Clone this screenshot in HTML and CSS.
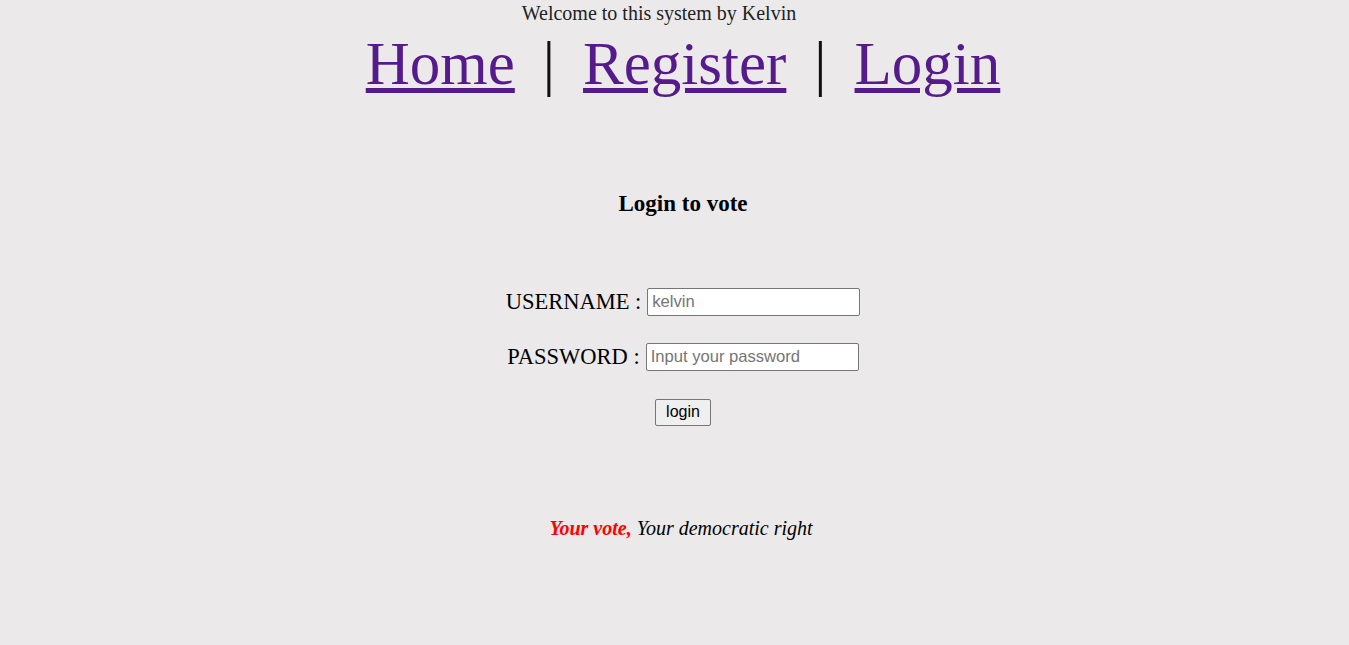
FILE: index.html
```html
<!DOCTYPE html>
<html>
<head>
<meta charset="utf-8">
<link rel="stylesheet" href="styles.css">
</head>
<body>
<div class="page">
  <p class="welcome">Welcome to this system by Kelvin</p>
  <nav class="nav">
    <a href="#" class="nav-link">Home</a><span class="sep">|</span><a href="#" class="nav-link">Register</a><span class="sep">|</span><a href="#" class="nav-link">Login</a>
  </nav>
  <h3 class="title">Login to vote</h3>
  <form class="form">
    <div class="row"><label class="label">USERNAME :</label><input class="field" type="text" placeholder="kelvin"></div>
    <div class="row"><label class="label">PASSWORD :</label><input class="field" type="password" placeholder="Input your password"></div>
    <div class="row"><button class="btn" type="button">login</button></div>
  </form>
  <p class="motto"><b class="red">Your vote,</b> Your democratic right</p>
</div>
</body>
</html>
```
FILE: styles.css
```css
html, body {
  margin: 0;
  padding: 0;
  background: #ebe9ea;
  font-family: "Liberation Serif", "Times New Roman", serif;
}
.page {
  display: flex;
  flex-direction: column;
  align-items: center;
  height: 645px;
  padding-left: 17px;
  box-sizing: border-box;
}
.welcome {
  margin: 2px 48px 0 0;
  font-size: 20px;
  line-height: 22px;
  color: #222;
}
.nav {
  display: flex;
  align-items: baseline;
  font-size: 61px;
  line-height: 80px;
  margin-top: 0;
}
.nav-link {
  color: #551a8b;
  text-decoration: underline;
  text-decoration-thickness: 5px;
  text-underline-offset: 4px;
}
.sep {
  color: #111;
  margin: 0 28px;
}
.title {
  margin: 85px 0 0;
  font-size: 23px;
  line-height: 30px;
  font-weight: bold;
}
.form {
  margin-top: 69px;
  display: flex;
  flex-direction: column;
  align-items: center;
  gap: 27px;
}
.row {
  display: flex;
  align-items: center;
  justify-content: center;
  height: 28px;
}
.label {
  font-size: 22.5px;
  margin-right: 6px;
}
.field {
  width: 213px;
  height: 28px;
  box-sizing: border-box;
  border: 1px solid #767676;
  border-radius: 2px;
  background: #fff;
  font-family: "Liberation Sans", Arial, sans-serif;
  font-size: 16.6px;
  padding: 1px 4px;
}
.field::placeholder {
  color: #757575;
}
.btn {
  font-family: "Liberation Sans", Arial, sans-serif;
  font-size: 16px;
  width: 56px;
  height: 27px;
  border: 1px solid #767676;
  border-radius: 2px;
  background: #efefef;
  color: #000;
  padding: 0;
}
.motto {
  margin: 91px 4px 0 0;
  font-size: 20px;
  font-style: italic;
}
.red {
  color: #ff0000;
}
```
